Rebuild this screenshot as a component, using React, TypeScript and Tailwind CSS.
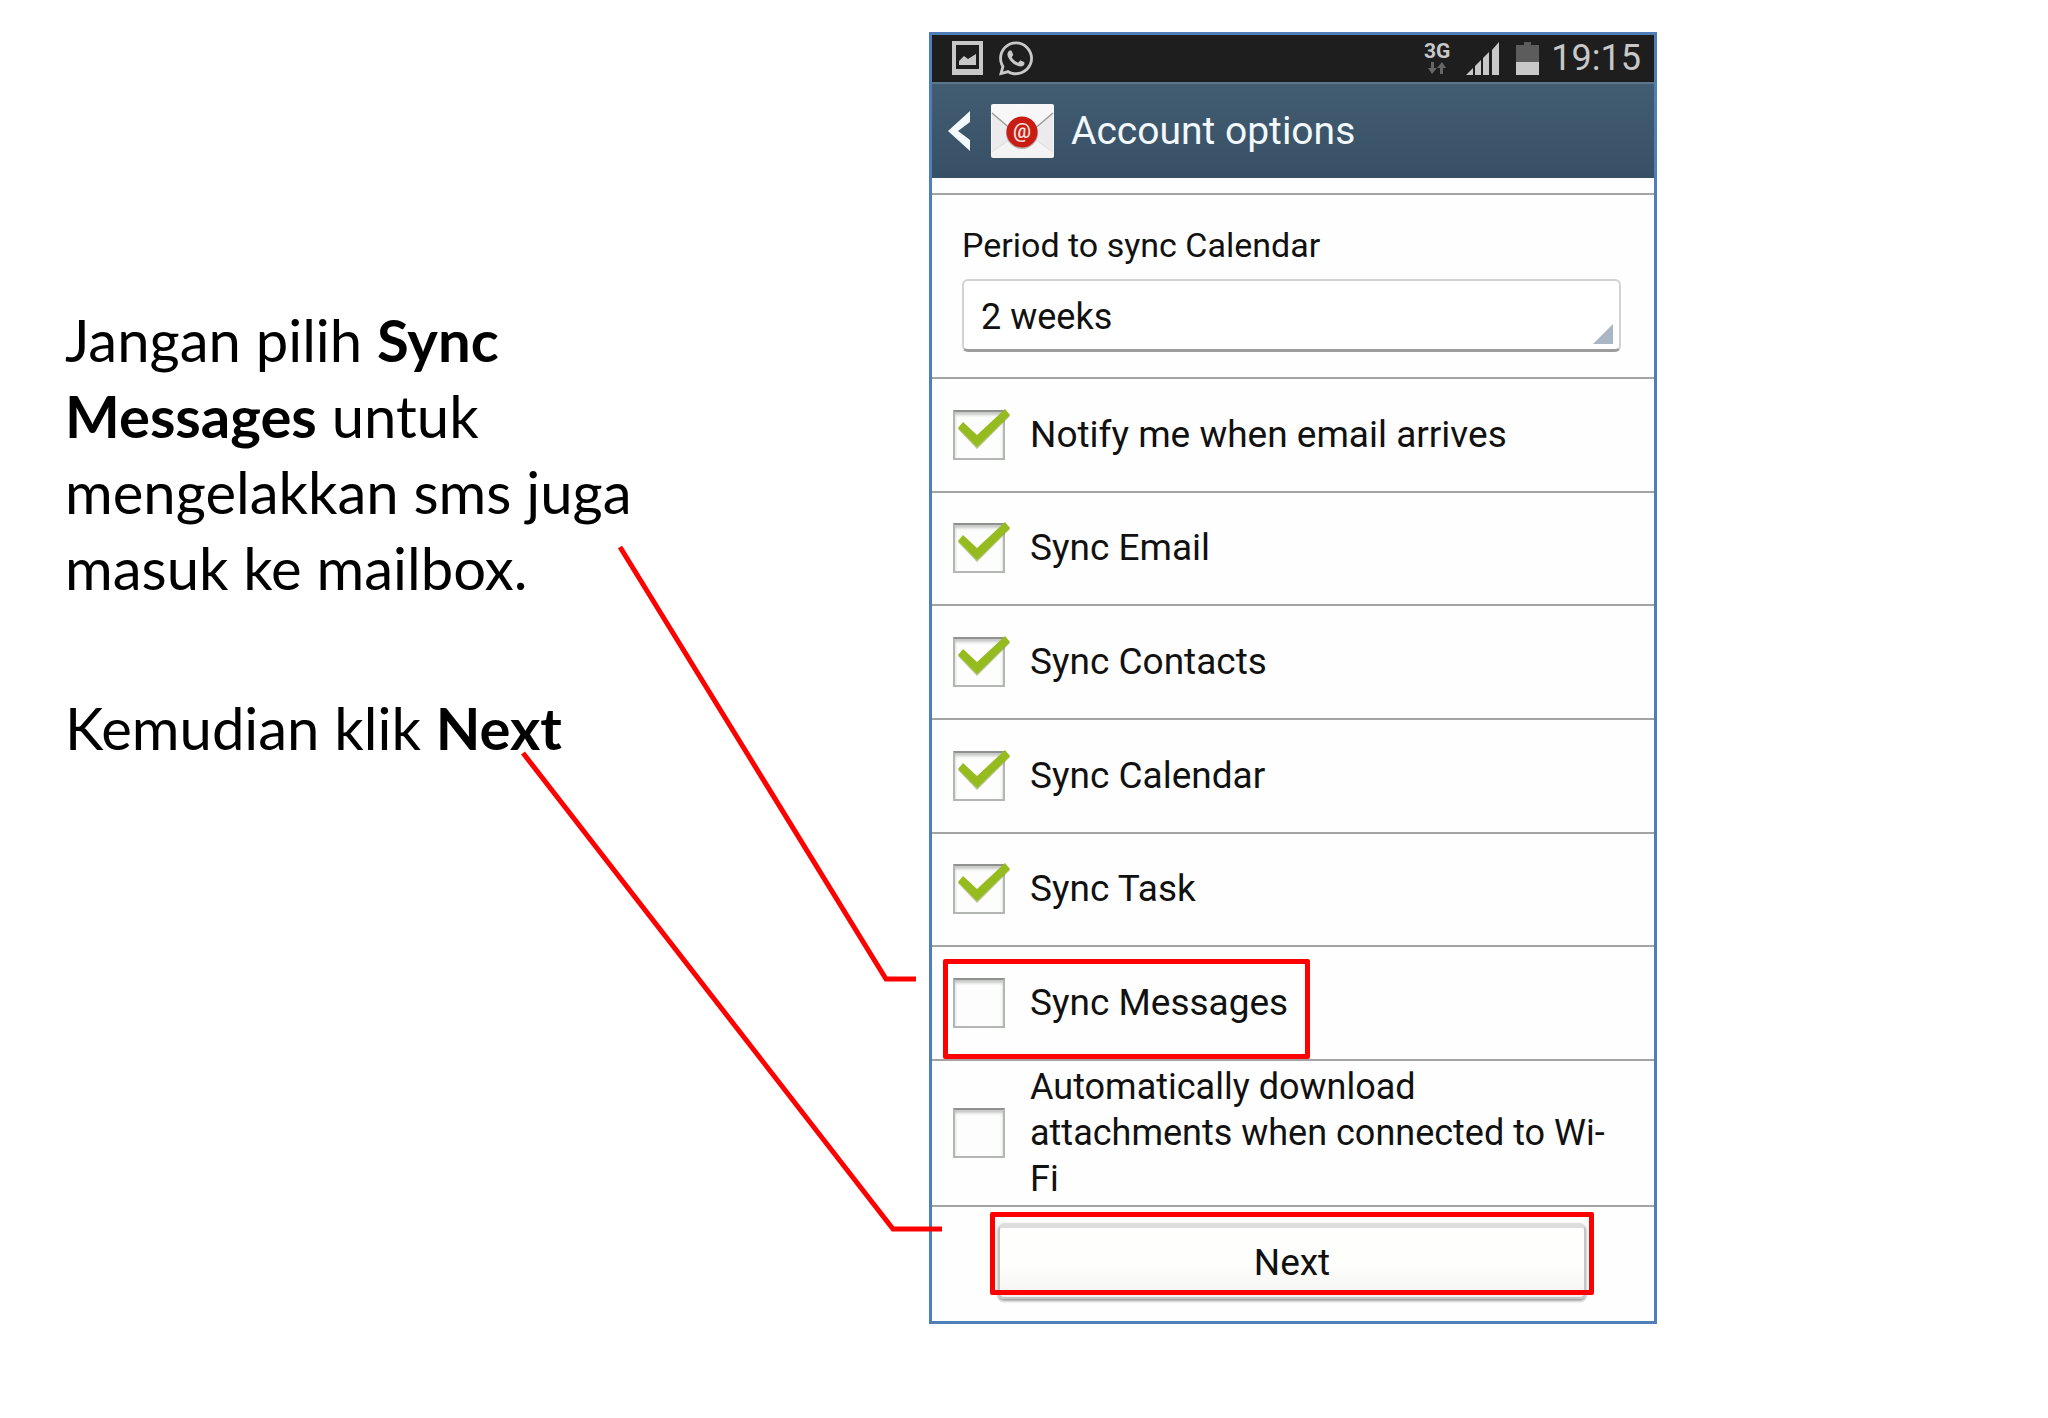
import { useState } from 'react';
import { clsx } from 'clsx';
import { FaWhatsapp } from 'react-icons/fa';

const initialOptions = [
  { id: 'notify', label: 'Notify me when email arrives', checked: true },
  { id: 'email', label: 'Sync Email', checked: true },
  { id: 'contacts', label: 'Sync Contacts', checked: true },
  { id: 'calendar', label: 'Sync Calendar', checked: true },
  { id: 'task', label: 'Sync Task', checked: true },
  { id: 'messages', label: 'Sync Messages', checked: false },
];

type OptionProps = {
  id: string;
  label: string;
  checked: boolean;
  compact?: boolean;
  highlighted?: boolean;
  onToggle: () => void;
};

function Option({ id, label, checked, compact, highlighted, onToggle }: OptionProps) {
  return (
    <div className="relative flex items-center border-b-2 border-[#a3a3a3] pl-[21px] pr-8">
      <span className="relative mr-[25px] h-[50px] w-[52px] shrink-0">
        <input
          id={id}
          type="checkbox"
          checked={checked}
          onChange={onToggle}
          className="block h-full w-full appearance-none border-2 border-[#b4b6b4] border-t-[#8f918f] bg-[#fcfdfc] shadow-[inset_0_3px_3px_#c6c8c6]"
        />
        {checked && (
          <svg viewBox="0 0 60 52" className="pointer-events-none absolute -top-1 left-0 h-[52px] w-[60px]">
            <path d="M10 18L24 31L52 5L57 10L24 43L5 23Z" fill="#6f8f1c" opacity="0.5" />
            <path d="M10 16L24 29L52 3L57 9L24 41L5 22Z" fill="#95bb1f" />
          </svg>
        )}
      </span>
      <label htmlFor={id} className={clsx('leading-[46px]', compact ? 'text-[36px]' : 'text-[37px]')}>
        {label}
      </label>
      {highlighted && (
        <span className="pointer-events-none absolute bottom-0 left-[11px] top-3 w-[367px] rounded-xs border-5 border-[#fe0000]" />
      )}
    </div>
  );
}

function StatusBar() {
  return (
    <div className="flex h-[47px] items-center bg-[#1e1e1e] pb-px pl-5 pr-[13px] text-[#c8c8c8]">
      <svg viewBox="0 0 31 34" className="h-[34px] w-[31px]">
        <path d="M0 0H31V34H0Z M4 4V28H27V4Z" fill="currentColor" fillRule="evenodd" />
        <path d="M7 24V20L12 15L16 18L24 13V24Z" fill="currentColor" />
      </svg>
      <FaWhatsapp className="ml-4 h-[39px] w-[34px]" />
      <div className="ml-auto flex flex-col items-center">
        <span className="text-[21px] font-bold leading-5">3G</span>
        <svg viewBox="0 0 20 14" className="h-3.5 w-5" fill="#666">
          <path d="M4 1H7V7H10L5 13L1 7H4Z" />
          <path d="M13 13H16V7H19L15 1L10 7H13Z" />
        </svg>
      </div>
      <svg viewBox="0 0 34 33" className="ml-4 h-[33px] w-[34px]" fill="currentColor">
        <path d="M0 33L7 26V33Z M9 24L15 18V33H9Z M17 16L23 10V33H17Z M26 8L33 0V33H26Z" />
      </svg>
      <svg viewBox="0 0 23 33" className="ml-4 h-[33px] w-[23px]">
        <path d="M0 3H8V0H15V3H23V20H0Z" fill="#5c5c5c" />
        <path d="M0 20H23V33H0Z" fill="#c8c8c8" />
      </svg>
      <span className="ml-3 text-[36px] leading-[46px]">19:15</span>
    </div>
  );
}

function TitleBar() {
  return (
    <header className="flex h-24 items-center border-t-2 border-[#5b788b] bg-linear-to-b from-[#425c72] to-[#375065] pb-px pl-4 text-[#f2f8fb]">
      <button type="button" aria-label="Back">
        <svg viewBox="0 0 22 40" className="h-10 w-[22px]">
          <path d="M22 0V11L10 20L22 29V40L0 20Z" fill="#f4fbfe" />
        </svg>
      </button>
      <svg viewBox="0 0 63 54" className="ml-[21px] h-[54px] w-[63px]">
        <defs>
          <linearGradient id="paper" x1="0" y1="0" x2="0" y2="1">
            <stop offset="0" stopColor="#f8f8f8" />
            <stop offset="1" stopColor="#f4f3f4" />
          </linearGradient>
        </defs>
        <rect width="63" height="54" rx="2" fill="url(#paper)" />
        <path d="M1 10L24 31L1 48Z M62 10L39 31L62 48Z" fill="#ebebed" />
        <path d="M1 9L22 27 M62 9L41 27" stroke="#9a9a9a" strokeWidth="1.5" />
        <path d="M1 48L22 33 M62 48L41 33" stroke="#dcdcdc" />
        <circle cx="31" cy="29" r="16" fill="#8d8480" opacity="0.6" />
        <circle cx="31" cy="28" r="15.5" fill="#c91d12" />
        <text
          x="31"
          y="34"
          textAnchor="middle"
          fontSize="20"
          fontWeight="500"
          fontFamily="Roboto, sans-serif"
          fill="#fbe4e0"
        >
          @
        </text>
      </svg>
      <h1 className="ml-[17px] text-[39px] leading-[46px]">Account options</h1>
    </header>
  );
}

export default function App() {
  const [options, setOptions] = useState(initialOptions);
  const [autoDownload, setAutoDownload] = useState(false);

  const toggle = (id: string) => {
    setOptions(options.map((o) => (o.id === id ? { ...o, checked: !o.checked } : o)));
  };

  return (
    <main className="relative grid min-h-screen grid-cols-[929fr_728fr_391fr] items-start bg-white text-[#111]">
      <section className="max-w-[660px] pl-[65px] pt-[302px] font-['Lato',sans-serif] text-[58px] leading-[76px] text-black">
        <p>
          Jangan pilih <strong>Sync</strong> <strong>Messages</strong> untuk mengelakkan sms juga masuk ke
          mailbox.
        </p>
        <p className="mt-[84px]">
          Kemudian klik <strong>Next</strong>
        </p>
      </section>

      <section className="mt-8 border-3 border-[#4f7fb9] bg-[#fefefe] font-['Roboto',sans-serif]">
        <StatusBar />
        <TitleBar />

        <div className="mt-[15px] border-y-2 border-[#a3a3a3] pb-[25px] pl-[30px] pr-[33px] pt-[27px]">
          <label htmlFor="period" className="block text-[34px] leading-[46px]">
            Period to sync Calendar
          </label>
          <div className="relative mt-[11px]">
            <select
              id="period"
              defaultValue="2 weeks"
              className="block h-[73px] w-full appearance-none rounded-md border-2 border-b-3 border-[#d2d2d2] border-b-[#9c9c9c] bg-white pl-[17px] pt-1 text-[36px] leading-[46px]"
            >
              <option>2 weeks</option>
              <option>1 month</option>
            </select>
            <svg viewBox="0 0 20 20" className="pointer-events-none absolute bottom-2 right-2 h-5 w-5">
              <path d="M20 0V20H0Z" fill="#a9b6c5" />
            </svg>
          </div>
        </div>

        <div className="grid h-[682px] grid-rows-6">
          {options.map((o) => (
            <Option key={o.id} {...o} highlighted={o.id === 'messages'} onToggle={() => toggle(o.id)} />
          ))}
        </div>
        <div className="grid h-[146px]">
          <Option
            id="auto-download"
            label="Automatically download attachments when connected to Wi-Fi"
            checked={autoDownload}
            compact
            onToggle={() => setAutoDownload(!autoDownload)}
          />
        </div>

        <div className="relative pb-[22px] pl-[66px] pr-[68px] pt-4">
          <button
            type="button"
            className="block h-[76px] w-full rounded-md border-x-2 border-b-2 border-t-5 border-[#c4c6c4] border-t-[#dddddd] bg-linear-to-b from-[#fefefd] from-50% to-[#f3f3f1] text-[37px] leading-[46px] shadow-[0_2px_3px_#999]"
          >
            Next
          </button>
          <span className="pointer-events-none absolute bottom-[26px] left-[58px] right-[60px] top-[5px] rounded-xs border-5 border-[#fe0000]" />
        </div>
      </section>

      {/* Callout lines from the instructions to the controls */}
      <svg
        viewBox="0 0 2048 1418"
        preserveAspectRatio="none"
        className="pointer-events-none absolute left-0 top-0 h-[1418px] w-full"
        fill="none"
        stroke="#fe0000"
        strokeWidth="5"
      >
        <path d="M620 547L886 979H916" />
        <path d="M523 753L893 1229H942" />
      </svg>
    </main>
  );
}
